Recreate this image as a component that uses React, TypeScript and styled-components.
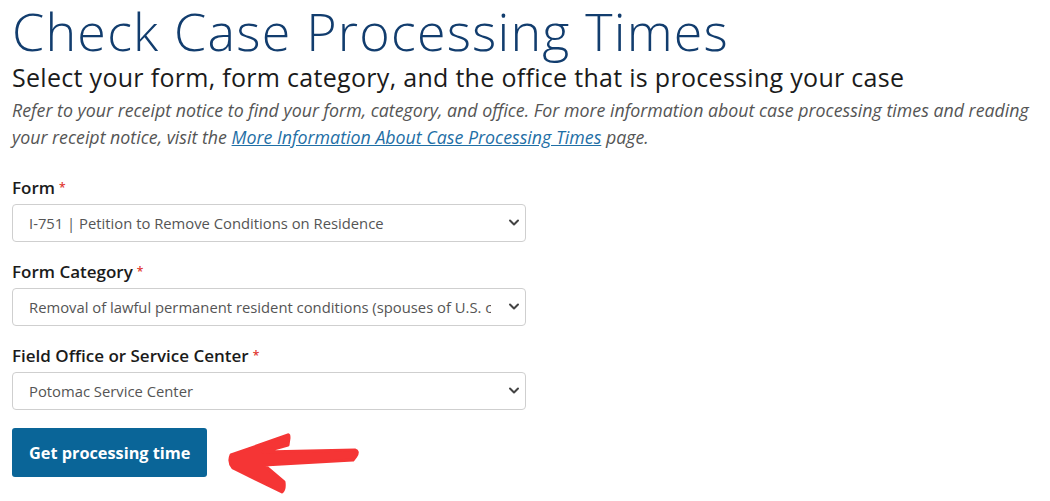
import styled, { createGlobalStyle } from 'styled-components'

const GlobalStyle = createGlobalStyle`
  html, body {
    margin: 0;
    padding: 0;
    background: #ffffff;
  }
  body {
    font-family: "Open Sans", Lato, Arial, sans-serif;
    color: #1b1b1b;
  }
`

const Page = styled.main`
  padding: 0 12px;
`

const Title = styled.h1`
  margin: 0;
  padding-top: 2px;
  font-size: 52px;
  line-height: 58px;
  font-weight: 300;
  letter-spacing: 1.2px;
  color: #123d6e;
`

const Subtitle = styled.h2`
  margin: 0;
  font-size: 25px;
  line-height: 34px;
  font-weight: 400;
  letter-spacing: 0.3px;
  color: #1b1b1b;
`

const Intro = styled.p`
  margin: 3px 0 0;
  font-size: 17.8px;
  line-height: 27px;
  font-style: italic;
  color: #555555;
`

const InfoLink = styled.a`
  color: #1f6fa6;
  text-decoration: underline;
`

const Form = styled.form`
  display: flex;
  flex-direction: column;
  margin-top: 27px;
`

const Field = styled.div`
  display: flex;
  flex-direction: column;
  gap: 6px;
  margin-bottom: 20px;
`

const Label = styled.label`
  font-size: 17px;
  line-height: 20px;
  font-weight: 600;
  color: #1b1b1b;
`

const Required = styled.span`
  color: #e0352f;
  font-size: 12px;
  vertical-align: top;
  margin-left: 4px;
`

const SelectWrap = styled.div`
  position: relative;
  width: 514px;
`

const Select = styled.select`
  appearance: none;
  width: 100%;
  height: 38px;
  padding: 0 34px 0 16px;
  border: 1px solid #cfcfcf;
  border-radius: 4px;
  background: #ffffff;
  font-family: "Open Sans", Lato, Arial, sans-serif;
  font-size: 14.8px;
  color: #555555;
`

const Chevron = styled.svg`
  position: absolute;
  right: 6px;
  top: 14px;
  pointer-events: none;
`

const ActionRow = styled.div`
  display: flex;
  align-items: flex-start;
  gap: 20px;
  margin-top: -2px;
`

const SubmitButton = styled.button`
  height: 49px;
  padding: 0 17px;
  border: none;
  border-radius: 3px;
  background: #0a6598;
  color: #ffffff;
  font-family: "Open Sans", Lato, Arial, sans-serif;
  font-size: 16.3px;
  font-weight: 700;
  cursor: pointer;
`

const Arrow = styled.svg`
  margin-top: 4px;
`

interface SelectFieldProps {
  id: string
  label: string
  value: string
}

function SelectField({ id, label, value }: SelectFieldProps) {
  return (
    <Field>
      <Label htmlFor={id}>
        {label}
        <Required>*</Required>
      </Label>
      <SelectWrap>
        <Select id={id} defaultValue={value}>
          <option value={value}>{value}</option>
        </Select>
        <Chevron width="12" height="9" viewBox="0 0 12 9">
          <path d="M2 2.5 L6 6.5 L10 2.5" fill="none" stroke="#444" strokeWidth="2" strokeLinecap="round" strokeLinejoin="round" />
        </Chevron>
      </SelectWrap>
    </Field>
  )
}

export default function App() {
  return (
    <>
      <GlobalStyle />
      <Page>
        <Title>Check Case Processing Times</Title>
        <Subtitle>Select your form, form category, and the office that is processing your case</Subtitle>
        <Intro>
          Refer to your receipt notice to find your form, category, and office. For more information about case processing times and reading
          your receipt notice, visit the <InfoLink href="#">More Information About Case Processing Times</InfoLink> page.
        </Intro>
        <Form onSubmit={(e) => e.preventDefault()}>
          <SelectField id="form" label="Form" value="I-751 | Petition to Remove Conditions on Residence" />
          <SelectField
            id="category"
            label="Form Category"
            value="Removal of lawful permanent resident conditions (spouses of U.S. citizens and their children)"
          />
          <SelectField id="office" label="Field Office or Service Center" value="Potomac Service Center" />
          <ActionRow>
            <SubmitButton type="submit">Get processing time</SubmitButton>
            <Arrow width="134" height="62" viewBox="0 0 134 62">
              <path
                d="M4 23 L61 3 Q62 2 62 6 L61 13 L36 20 L128 18 Q132 19 129 24 L126 28 L37 33 L57 50 Q58 57 55 60 L6 36 Q1 30 4 23 Z"
                fill="#f53535"
                stroke="#f53535"
                strokeWidth="3"
                strokeLinejoin="round"
              />
            </Arrow>
          </ActionRow>
        </Form>
      </Page>
    </>
  )
}
